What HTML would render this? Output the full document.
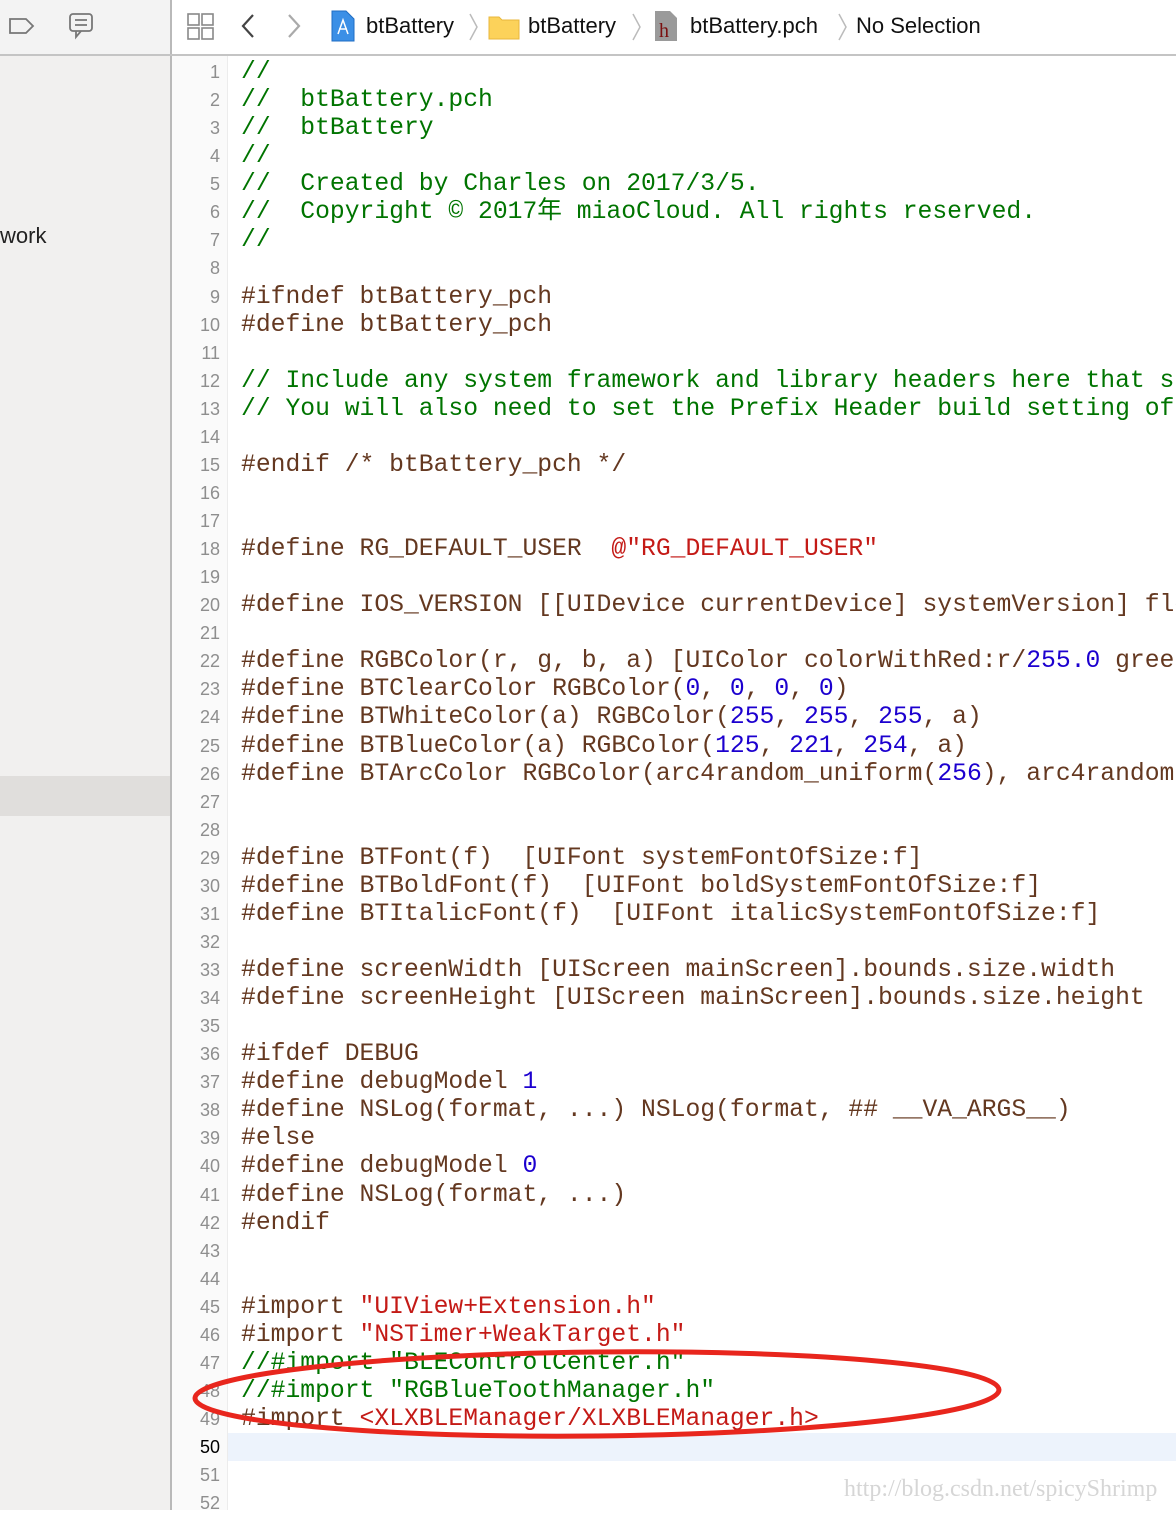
<!DOCTYPE html>
<html><head><meta charset="utf-8"><style>
*{margin:0;padding:0;box-sizing:border-box}
body{width:1176px;height:1510px;overflow:hidden;background:#fff;position:relative;font-family:"Liberation Sans",sans-serif}
#side{position:absolute;left:0;top:0;width:170px;height:1510px;background:#f1f0ef}
#sideTop{position:absolute;left:0;top:0;width:170px;height:54px;background:#f3f3f3}
#vline{position:absolute;left:170px;top:0;width:2px;height:1510px;background:#b9b9b9}
#hline{position:absolute;left:0;top:54px;width:1176px;height:2px;background:#c4c4c4}
#gut{position:absolute;left:172px;top:56px;width:56px;height:1454px;background:#fafafa;border-right:1px solid #ececec}
#hl{position:absolute;left:228px;top:1433px;width:948px;height:28px;background:#edf3fc}
.ln{position:absolute;left:172px;width:48px;text-align:right;font:18px "Liberation Sans",sans-serif;color:#8e8e8e;line-height:28.06px}
#code{position:absolute;left:241px;top:58px;width:935px;overflow:hidden;font-family:"Liberation Mono","Noto Sans CJK SC",monospace;font-size:24.7px;line-height:28.06px;color:#643820;white-space:pre}
.c{color:#007400}.s{color:#c41a16}.n{color:#1c00cf}
.bc{position:absolute;top:13px;font-size:22px;color:#111}
</style></head><body>
<div id="side"></div><div id="sideTop"></div>
<div style="position:absolute;left:0;top:776px;width:170px;height:40px;background:#e0dedc"></div>
<div style="position:absolute;left:0;top:223px;font-size:22px;color:#222">work</div>
<svg style="position:absolute;left:8px;top:16px" width="28" height="20"><path d="M2 3H18L25 10L18 17H2Z" fill="none" stroke="#777" stroke-width="1.8"/></svg>
<svg style="position:absolute;left:68px;top:12px" width="28" height="28"><rect x="2" y="2" width="22" height="17" rx="3" fill="none" stroke="#777" stroke-width="1.8"/><path d="M8 19L8 25L13 19" fill="none" stroke="#777" stroke-width="1.8"/><path d="M7 8H19M7 13H19" stroke="#777" stroke-width="1.8"/></svg>
<div id="vline"></div><div id="hline"></div>
<svg style="position:absolute;left:187px;top:13px" width="28" height="28" fill="none" stroke="#888" stroke-width="1.6"><rect x="1" y="1" width="11" height="11"/><rect x="15" y="1" width="11" height="11"/><rect x="1" y="15" width="11" height="11"/><rect x="15" y="15" width="11" height="11"/></svg>
<svg style="position:absolute;left:238px;top:12px" width="20" height="30"><path d="M15 3L5 14L15 25" fill="none" stroke="#444" stroke-width="2.2"/></svg>
<svg style="position:absolute;left:284px;top:12px" width="20" height="30"><path d="M5 3L15 14L5 25" fill="none" stroke="#aaa" stroke-width="2.2"/></svg>
<svg style="position:absolute;left:331px;top:10px" width="24" height="32"><path d="M1 1H15L23 9V31H1Z" fill="#3b8fe6" stroke="#1f6dc4"/><path d="M7 24L12 10L17 24M8 19H16" stroke="#fff" stroke-width="1.5" fill="none"/></svg>
<div class="bc" style="left:366px">btBattery</div>
<svg style="position:absolute;left:468px;top:12px" width="12" height="30"><path d="M2 2L9 15L2 28" fill="none" stroke="#bbb" stroke-width="1.5"/></svg>
<svg style="position:absolute;left:488px;top:14px" width="32" height="26"><path d="M1 3H11L14 6H31V25H1Z" fill="#fcd25a" stroke="#e8b73c"/></svg>
<div class="bc" style="left:528px">btBattery</div>
<svg style="position:absolute;left:631px;top:12px" width="12" height="30"><path d="M2 2L9 15L2 28" fill="none" stroke="#bbb" stroke-width="1.5"/></svg>
<svg style="position:absolute;left:654px;top:10px" width="24" height="32"><path d="M1 1H16L23 8V31H1Z" fill="#9a9a9a"/><text x="5" y="27" font-family="Liberation Serif" font-size="20" fill="#7a1010">h</text></svg>
<div class="bc" style="left:690px">btBattery.pch</div>
<svg style="position:absolute;left:837px;top:12px" width="12" height="30"><path d="M2 2L9 15L2 28" fill="none" stroke="#bbb" stroke-width="1.5"/></svg>
<div class="bc" style="left:856px">No Selection</div>
<div id="gut"></div><div id="hl"></div>
<div class="ln" style="top:58px">1<br>2<br>3<br>4<br>5<br>6<br>7<br>8<br>9<br>10<br>11<br>12<br>13<br>14<br>15<br>16<br>17<br>18<br>19<br>20<br>21<br>22<br>23<br>24<br>25<br>26<br>27<br>28<br>29<br>30<br>31<br>32<br>33<br>34<br>35<br>36<br>37<br>38<br>39<br>40<br>41<br>42<br>43<br>44<br>45<br>46<br>47<br>48<br>49<br><span style="color:#000">50</span><br>51<br>52</div>
<div id="code"><span class="c">//
//  btBattery.pch
//  btBattery
//
//  Created by Charles on 2017/3/5.
//  Copyright © 2017年 miaoCloud. All rights reserved.
//</span>

#ifndef btBattery_pch
#define btBattery_pch

<span class="c">// Include any system framework and library headers here that should be included
// You will also need to set the Prefix Header build setting of your project</span>

#endif /* btBattery_pch */


#define RG_DEFAULT_USER  <span class="s">@"RG_DEFAULT_USER"</span>

#define IOS_VERSION [[UIDevice currentDevice] systemVersion] floatValue]

#define RGBColor(r, g, b, a) [UIColor colorWithRed:r/<span class="n">255.0</span> green
#define BTClearColor RGBColor(<span class="n">0</span>, <span class="n">0</span>, <span class="n">0</span>, <span class="n">0</span>)
#define BTWhiteColor(a) RGBColor(<span class="n">255</span>, <span class="n">255</span>, <span class="n">255</span>, a)
#define BTBlueColor(a) RGBColor(<span class="n">125</span>, <span class="n">221</span>, <span class="n">254</span>, a)
#define BTArcColor RGBColor(arc4random_uniform(<span class="n">256</span>), arc4random


#define BTFont(f)  [UIFont systemFontOfSize:f]
#define BTBoldFont(f)  [UIFont boldSystemFontOfSize:f]
#define BTItalicFont(f)  [UIFont italicSystemFontOfSize:f]

#define screenWidth [UIScreen mainScreen].bounds.size.width
#define screenHeight [UIScreen mainScreen].bounds.size.height

#ifdef DEBUG
#define debugModel <span class="n">1</span>
#define NSLog(format, ...) NSLog(format, ## __VA_ARGS__)
#else
#define debugModel <span class="n">0</span>
#define NSLog(format, ...)
#endif


#import <span class="s">"UIView+Extension.h"</span>
#import <span class="s">"NSTimer+WeakTarget.h"</span>
<span class="c">//#import "BLEControlCenter.h"
//#import "RGBlueToothManager.h"</span>
#import <span class="s">&lt;XLXBLEManager/XLXBLEManager.h&gt;</span>
</div>
<svg style="position:absolute;left:0;top:0" width="1176" height="1510"><ellipse cx="597" cy="1394" rx="402" ry="42" transform="rotate(-0.6 597 1394)" fill="none" stroke="#e8261d" stroke-width="5"/></svg>
<div style="position:absolute;left:844px;top:1476px;font:24px 'Liberation Serif',serif;color:#d6d6d6;white-space:nowrap">http://blog.csdn.net/spicyShrimp</div>
</body></html>
